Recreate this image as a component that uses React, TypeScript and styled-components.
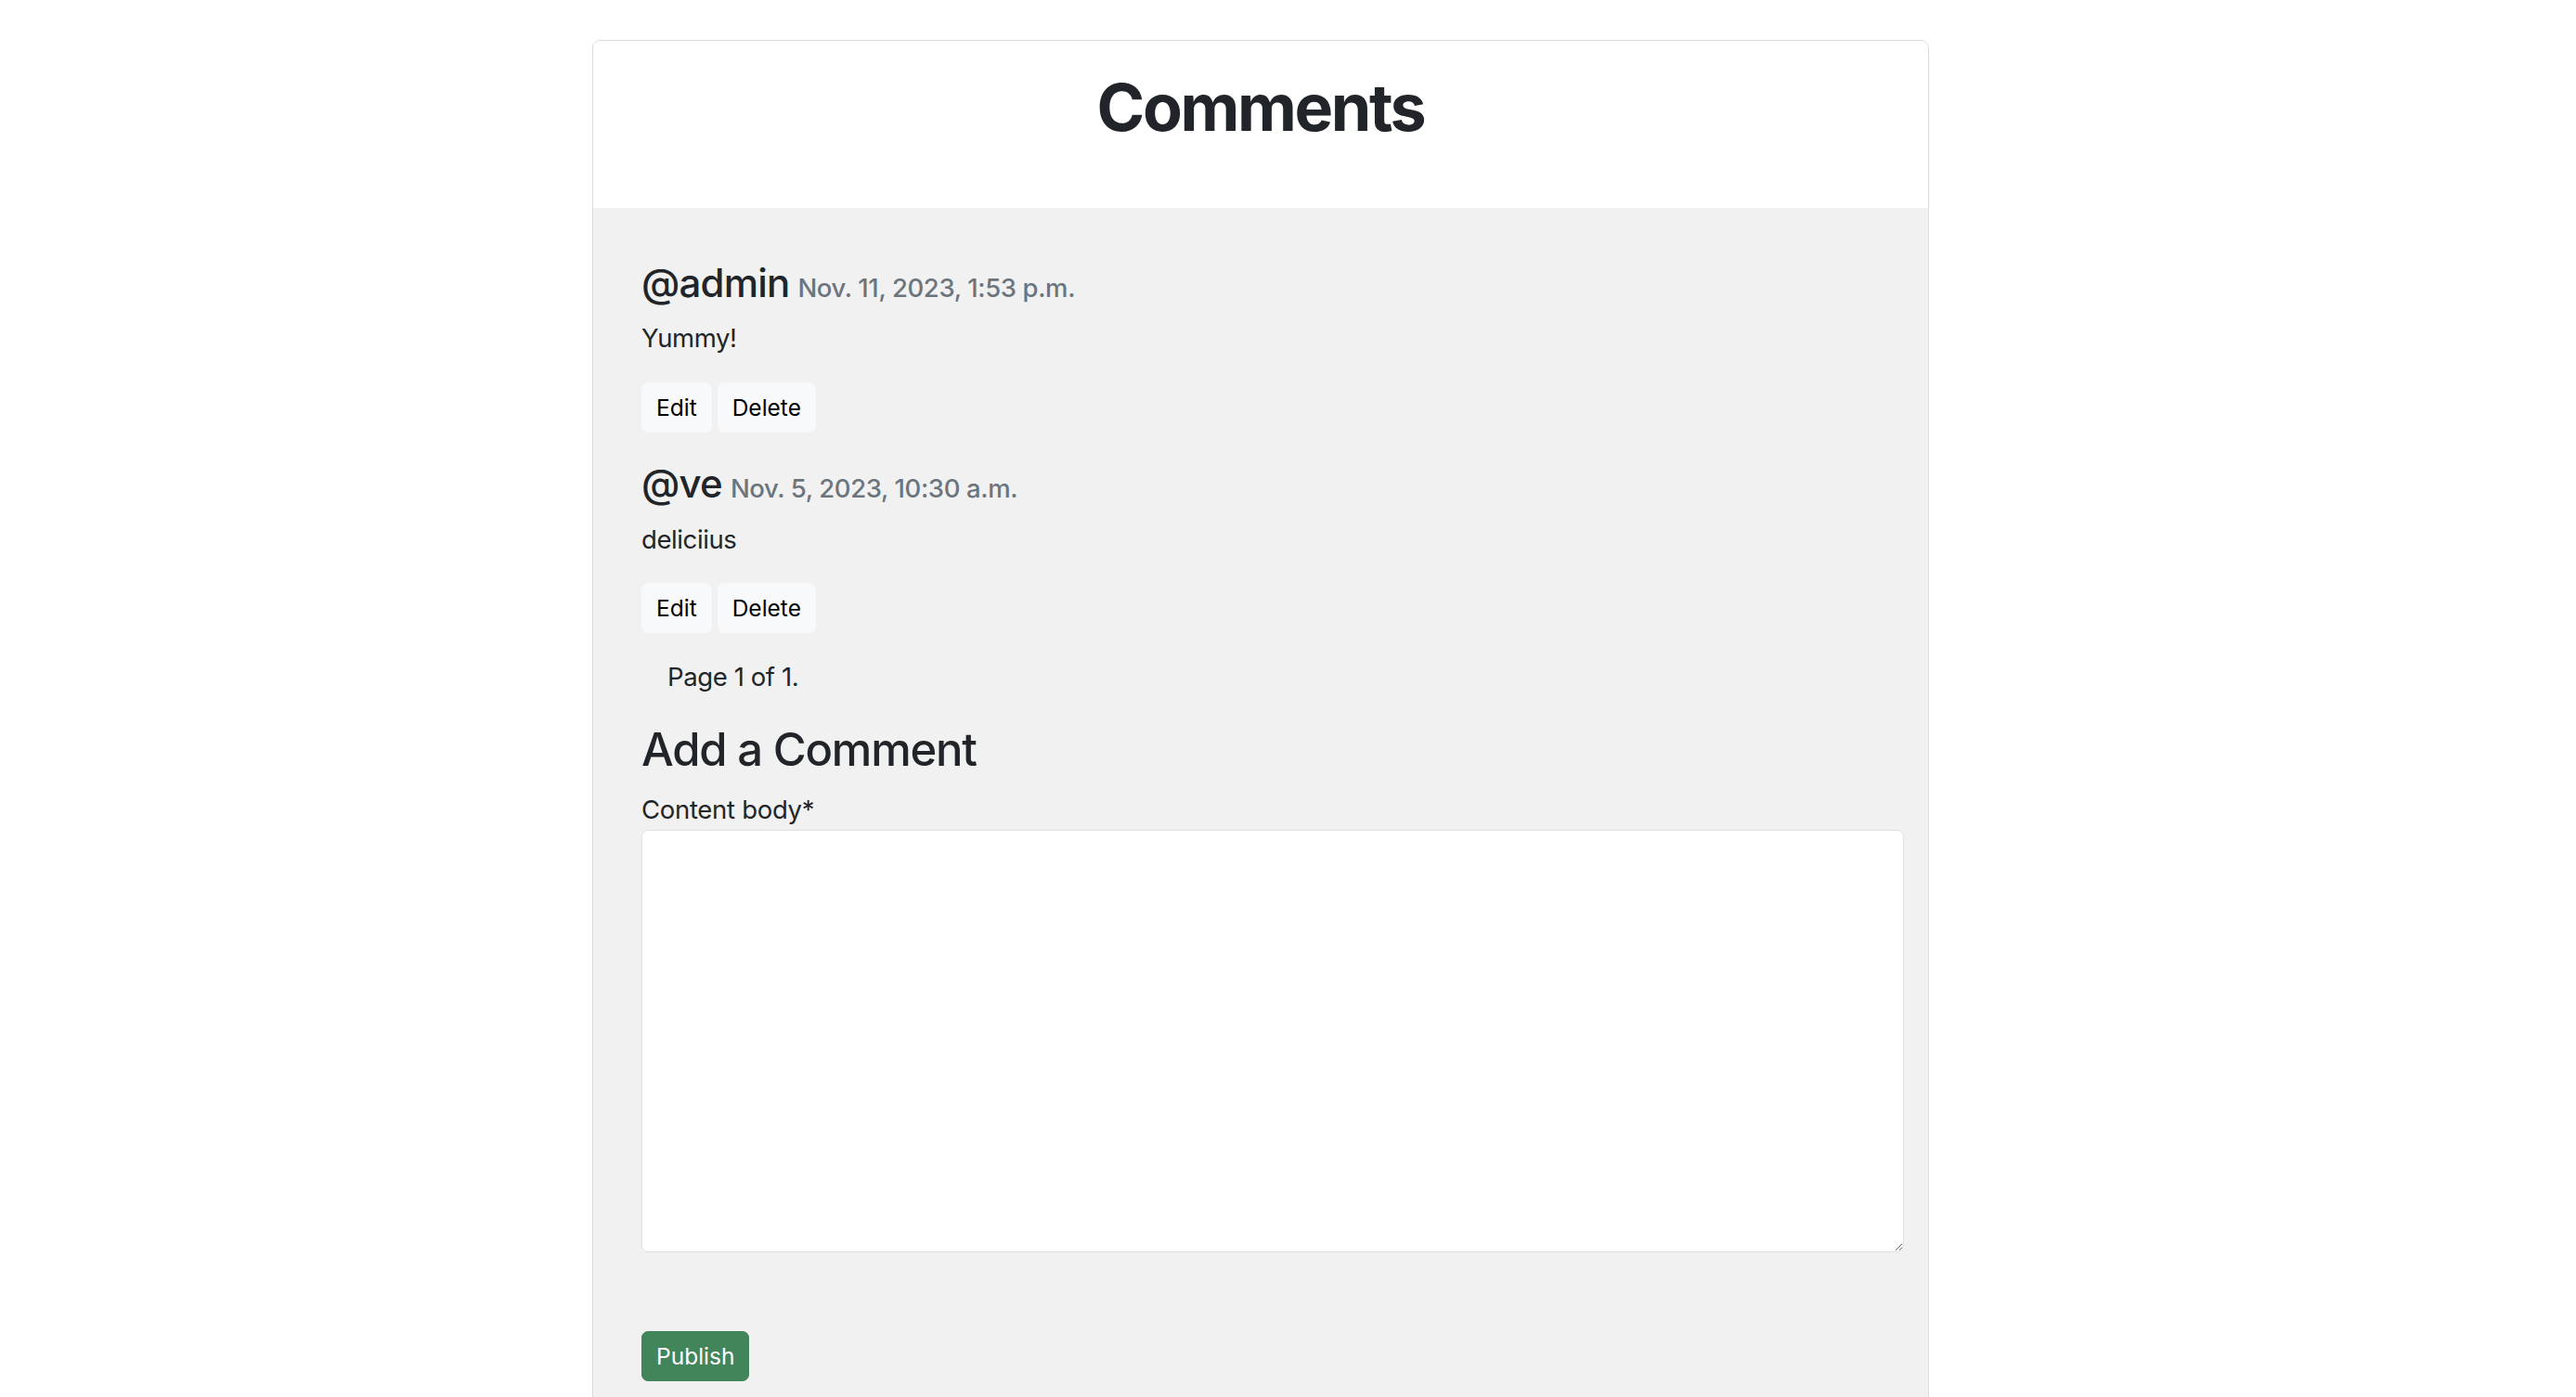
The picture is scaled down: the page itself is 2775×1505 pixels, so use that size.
import React from "react";
import styled, { createGlobalStyle } from "styled-components";

const GlobalStyle = createGlobalStyle`
  html, body {
    margin: 0;
    padding: 0;
    background: #ffffff;
  }
  body {
    font-family: Inter, "Noto Sans", sans-serif;
    color: #212529;
  }
  * { box-sizing: border-box; }
`;

const Page = styled.main`
  padding: 43px 0 0 638px;
`;

const Card = styled.section`
  width: 1440px;
  border: 1px solid #dcdcdc;
  border-radius: 9px;
  overflow: hidden;
  background: #f1f1f1;
`;

const CardHeader = styled.header`
  background: #ffffff;
  height: 180px;
  padding-top: 30px;
  text-align: center;
`;

const Title = styled.h1`
  margin: 0;
  font-size: 70px;
  line-height: 1.2;
  font-weight: 700;
  letter-spacing: -2.4px;
  color: #212529;
`;

const CardBody = styled.div`
  padding: 56px 26px 40px 52px;
`;

const CommentItem = styled.article`
  margin-bottom: 30px;
`;

const CommentHead = styled.h4`
  margin: 0 0 14px;
  font-size: 42px;
  line-height: 1.2;
  font-weight: 500;
  color: #212529;
`;

const Author = styled.span`
  letter-spacing: -0.8px;
`;

const DateText = styled.small`
  font-size: 27.5px;
  font-weight: 500;
  letter-spacing: -0.4px;
  color: #6c757d;
  margin-left: 9px;
`;

const CommentText = styled.p`
  margin: 0 0 26px;
  font-size: 27.5px;
  line-height: 1.52;
  letter-spacing: -0.4px;
`;

const Actions = styled.div`
  display: flex;
  gap: 6px;
`;

const SmallButton = styled.button<{ $variant?: "light" | "success" }>`
  height: 54px;
  padding: 0 15px;
  border: 1.75px solid ${(p) => (p.$variant === "success" ? "#42855a" : "#f8f9fa")};
  border-radius: 7px;
  background: ${(p) => (p.$variant === "success" ? "#42855a" : "#f8f9fa")};
  color: ${(p) => (p.$variant === "success" ? "#ffffff" : "#000000")};
  font-family: inherit;
  font-size: 24.5px;
  line-height: 1.5;
  cursor: pointer;
`;

const Pager = styled.p`
  margin: -3px 0 28.5px 28px;
  font-size: 27.5px;
  line-height: 1.5;
  letter-spacing: -0.4px;
`;

const SectionTitle = styled.h3`
  margin: 0 0 14px;
  font-size: 49px;
  line-height: 1.2;
  font-weight: 500;
  letter-spacing: -1.2px;
`;

const Label = styled.label`
  display: block;
  font-size: 27.5px;
  line-height: 1.52;
  letter-spacing: -0.3px;
`;

const TextArea = styled.textarea`
  display: block;
  width: 100%;
  height: 455px;
  border: 1.75px solid #dee2e6;
  border-radius: 7px;
  background: #ffffff;
  font-family: inherit;
  font-size: 28px;
  padding: 10px 21px;
  margin: 0 0 85.5px;
  resize: vertical;
`;

const comments = [
  { author: "@admin", date: "Nov. 11, 2023, 1:53 p.m.", body: "Yummy!" },
  { author: "@ve", date: "Nov. 5, 2023, 10:30 a.m.", body: "deliciius" },
];

export default function App() {
  return (
    <>
      <GlobalStyle />
      <Page>
        <Card>
          <CardHeader>
            <Title>Comments</Title>
          </CardHeader>
          <CardBody>
            {comments.map((c) => (
              <CommentItem key={c.author}>
                <CommentHead>
                  <Author>{c.author}</Author>
                  <DateText>{c.date}</DateText>
                </CommentHead>
                <CommentText>{c.body}</CommentText>
                <Actions>
                  <SmallButton>Edit</SmallButton>
                  <SmallButton>Delete</SmallButton>
                </Actions>
              </CommentItem>
            ))}
            <Pager>Page 1 of 1.</Pager>
            <SectionTitle>Add a Comment</SectionTitle>
            <form>
              <Label htmlFor="body">Content body*</Label>
              <TextArea id="body" />
              <SmallButton $variant="success" type="button">
                Publish
              </SmallButton>
            </form>
          </CardBody>
        </Card>
      </Page>
    </>
  );
}
